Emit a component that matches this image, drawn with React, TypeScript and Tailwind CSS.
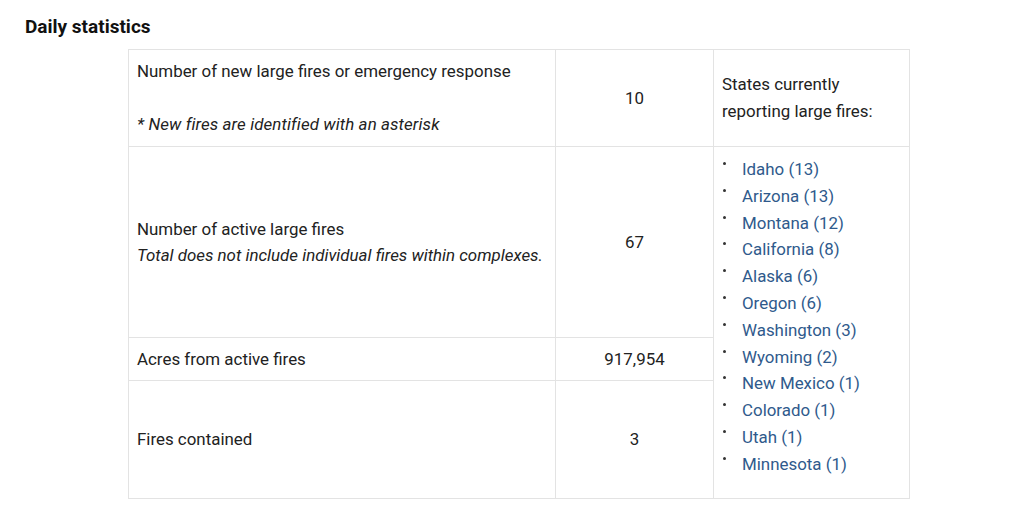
import React from "react";

const states = [
  "Idaho (13)",
  "Arizona (13)",
  "Montana (12)",
  "California (8)",
  "Alaska (6)",
  "Oregon (6)",
  "Washington (3)",
  "Wyoming (2)",
  "New Mexico (1)",
  "Colorado (1)",
  "Utah (1)",
  "Minnesota (1)",
];

const App: React.FC = () => {
  return (
    <div className="bg-white min-h-[509px] text-[#222] font-['Roboto',sans-serif]">
      <h2 className="pl-[25px] pt-[13px] text-[19px] leading-[27px] font-bold text-[#111]">Daily statistics</h2>
      <table className="ml-[128px] mt-[9px] w-[781px] table-fixed border-collapse text-[16.9px] leading-[26.5px]">
        <colgroup>
          <col className="w-[427px]" />
          <col className="w-[158px]" />
          <col className="w-[196px]" />
        </colgroup>
        <tbody>
          <tr className="h-[97px]">
            <td className="border border-[#e3e3e3] px-[8px] py-0 align-middle">
              <div>Number of new large fires or emergency response</div>
              <div>&nbsp;</div>
              <div className="italic tracking-[0.1px]">* New fires are identified with an asterisk</div>
            </td>
            <td className="border border-[#e3e3e3] text-center align-middle">10</td>
            <td className="border border-[#e3e3e3] px-[8px] align-middle leading-[27px]">
              States currently reporting large fires:
            </td>
          </tr>
          <tr className="h-[191px]">
            <td className="border border-[#e3e3e3] px-[8px] align-middle">
              <div>Number of active large fires</div>
              <div className="italic">Total does not include individual fires within complexes.</div>
            </td>
            <td className="border border-[#e3e3e3] text-center align-middle">67</td>
            <td rowSpan={3} className="border border-[#e3e3e3] pl-[9px] pr-[8px] pt-[9px] pb-[20px] align-top">
              <ul className="flex flex-col">
                {states.map((s) => (
                  <li key={s} className="flex items-start h-[26.8px] leading-[26.8px]">
                    <span className="mt-[6px] w-[3px] h-[3px] rounded-full bg-[#333] shrink-0" />
                    <span className="ml-[16px] text-[#2f5a8c]">{s}</span>
                  </li>
                ))}
              </ul>
            </td>
          </tr>
          <tr className="h-[43px]">
            <td className="border border-[#e3e3e3] px-[8px] align-middle">Acres from active fires</td>
            <td className="border border-[#e3e3e3] text-center align-middle">917,954</td>
          </tr>
          <tr className="h-[117px]">
            <td className="border border-[#e3e3e3] px-[8px] align-middle">Fires contained</td>
            <td className="border border-[#e3e3e3] text-center align-middle">3</td>
          </tr>
        </tbody>
      </table>
    </div>
  );
};

export default App;
